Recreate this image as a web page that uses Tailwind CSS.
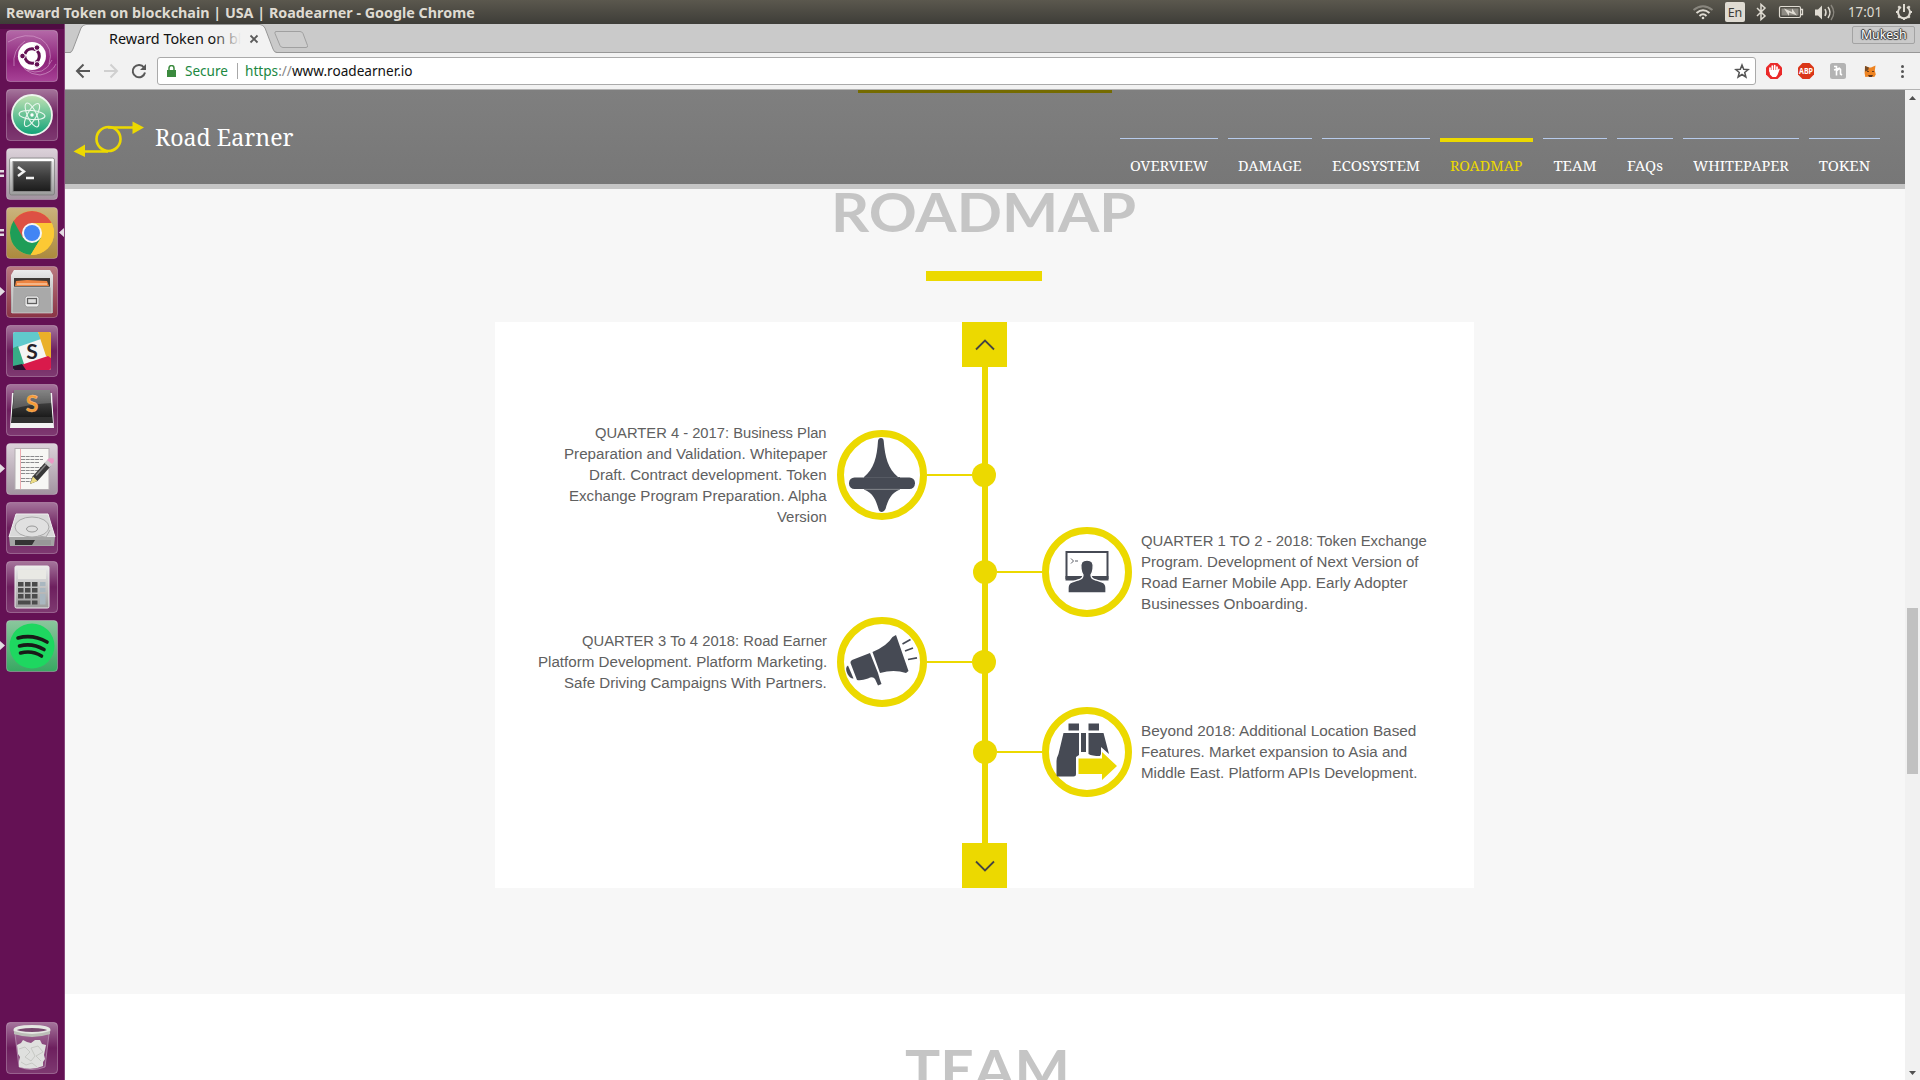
<!DOCTYPE html>
<html lang="en">
<head>
<meta charset="utf-8">
<title>Reward Token on blockchain | USA | Roadearner</title>
<script src="https://cdn.jsdelivr.net/npm/@tailwindcss/browser@4"></script>
</head>
<body class="w-[1920px] h-[1080px] overflow-hidden flex flex-col bg-white font-['Noto_Sans',sans-serif]">

<!-- System bar -->
<div class="h-6 shrink-0 flex items-center justify-between bg-linear-to-b from-[#5b584e] to-[#3e3d38] text-[#dfdbd2]">
  <div class="pl-1.5 text-[15px] leading-6 font-bold whitespace-nowrap"><span data-w="469">Reward Token on blockchain | USA | Roadearner - Google Chrome</span></div>
  <svg class="w-[232px] h-6 shrink-0" viewBox="1688 0 232 24" fill="none" stroke="#dfdbd2">
    <path d="M1693.500 10Q1703 2.500 1712.500 10" stroke="#89867e" stroke-width="2"/>
    <path d="M1696.500 13Q1703 7.500 1709.500 13M1699.500 16Q1703 12.500 1706.500 16" stroke-width="2"/>
    <circle cx="1703" cy="18" r="1.300" fill="#dfdbd2" stroke="none"/>
    <rect x="1725" y="2" width="20" height="20" rx="2" fill="#dfdbd2" stroke="none"/>
    <text x="1735" y="17" text-anchor="middle" font-size="12.500" font-family="Noto Sans, sans-serif" fill="#3c3b37" stroke="none">En</text>
    <path d="M1757 8l8 8-4 3.500V4.500l4 3.500-8 8" stroke-width="1.500"/>
    <rect x="1779.500" y="6.500" width="21" height="11" rx="1.500" stroke-width="1.200"/>
    <rect x="1781.500" y="8.500" width="17" height="7" fill="#8e8b83" stroke="none"/>
    <path d="M1801 9.500h1.500v5h-1.500" stroke-width="1.300"/>
    <path d="M1784 8.500l8 3.500v-3.500l5 7-8-3v3.500z" fill="#dfdbd2" stroke="none"/>
    <path d="M1815 9.500h3l4-4v14l-4-4h-3z" fill="#dfdbd2" stroke="none"/>
    <path d="M1825 9q2 3.500 0 7M1828 7q4 5.500 0 11" stroke-width="1.500"/>
    <path d="M1831 5q5.500 7.500 0 15" stroke="#89867e" stroke-width="1.500"/>
    <text x="1848" y="17" textLength="34" lengthAdjust="spacingAndGlyphs" font-size="15" font-family="Noto Sans, sans-serif" fill="#dfdbd2" stroke="none">17:01</text>
    <path d="M1901 7a6 6 0 1 0 6 0M1904 4v8" stroke-width="2"/>
    <path d="M1904 18v2M1896 12h2M1910 12h2M1898.300 6.300l1.700 1.700M1909.700 6.300l-1.700 1.700M1898.300 17.700l1.700-1.700M1909.700 17.700l-1.700-1.700" stroke-width="2.200"/>
  </svg>
</div>

<div class="flex flex-1 min-h-0">

<!-- Launcher -->
<aside class="w-[65px] shrink-0 bg-[#641154] border-r border-[#86457b]">
<svg class="block w-16 h-[1056px]" viewBox="0 24 64 1056">
  <defs>
    <linearGradient id="tile" x1="0" y1="0" x2="0" y2="1"><stop offset="0" stop-color="#fff" stop-opacity=".42"/><stop offset=".5" stop-color="#fff" stop-opacity=".06"/><stop offset="1" stop-color="#fff" stop-opacity=".17"/></linearGradient>
    <linearGradient id="dash" x1="0" y1="0" x2="0" y2="1"><stop offset="0" stop-color="#b469a8"/><stop offset=".6" stop-color="#8c2179"/><stop offset="1" stop-color="#a84397"/></linearGradient>
    <linearGradient id="atom" x1="0" y1="0" x2="0" y2="1"><stop offset="0" stop-color="#c3e3b5"/><stop offset="1" stop-color="#10a277"/></linearGradient>
    <linearGradient id="metal" x1="0" y1="0" x2="0" y2="1"><stop offset="0" stop-color="#ececec"/><stop offset="1" stop-color="#9b9b9b"/></linearGradient>
    <linearGradient id="dark" x1="0" y1="0" x2="0" y2="1"><stop offset="0" stop-color="#666"/><stop offset=".5" stop-color="#3c3c3c"/><stop offset="1" stop-color="#1b1b1b"/></linearGradient>
    <linearGradient id="grey" x1="0" y1="0" x2="0" y2="1"><stop offset="0" stop-color="#dcd2da"/><stop offset="1" stop-color="#a294a0"/></linearGradient>
    <linearGradient id="gold" x1="0" y1="0" x2="0" y2="1"><stop offset="0" stop-color="#cbb37d"/><stop offset="1" stop-color="#ac8a3d"/></linearGradient>
    <linearGradient id="rust" x1="0" y1="0" x2="0" y2="1"><stop offset="0" stop-color="#b97a80"/><stop offset="1" stop-color="#893345"/></linearGradient>
    <linearGradient id="green" x1="0" y1="0" x2="0" y2="1"><stop offset="0" stop-color="#8bc79d"/><stop offset="1" stop-color="#38a862"/></linearGradient>
    <clipPath id="slackclip"><rect x="13" y="332" width="38" height="38" rx="2"/></clipPath>
    <clipPath id="disc"><circle cx="32" cy="233" r="22"/></clipPath>
  </defs>
  <rect y="24" width="64" height="5" fill="#4f0c42"/>
  <g stroke="#fff" stroke-opacity=".28">
    <rect x="6.500" y="30.500" width="51" height="51" rx="3.500" fill="url(#dash)"/>
    <rect x="6.500" y="89.500" width="51" height="51" rx="3.500" fill="url(#tile)"/>
    <rect x="6.500" y="148.500" width="51" height="51" rx="3.500" fill="url(#grey)"/>
    <rect x="6.500" y="207.500" width="51" height="51" rx="3.500" fill="url(#gold)"/>
    <rect x="6.500" y="266.500" width="51" height="51" rx="3.500" fill="url(#rust)"/>
    <rect x="6.500" y="325.500" width="51" height="51" rx="3.500" fill="url(#tile)"/>
    <rect x="6.500" y="384.500" width="51" height="51" rx="3.500" fill="url(#tile)"/>
    <rect x="6.500" y="443.500" width="51" height="51" rx="3.500" fill="url(#grey)"/>
    <rect x="6.500" y="502.500" width="51" height="51" rx="3.500" fill="url(#tile)"/>
    <rect x="6.500" y="561.500" width="51" height="51" rx="3.500" fill="url(#tile)"/>
    <rect x="6.500" y="620.500" width="51" height="51" rx="3.500" fill="url(#green)"/>
    <rect x="6.500" y="1022.500" width="51" height="51" rx="3.500" fill="url(#tile)"/>
  </g>
  <!-- running markers -->
  <g fill="#e3dce2">
    <rect x="0" y="170" width="4" height="2.500"/><rect x="0" y="174.500" width="4" height="2.500"/>
    <rect x="0" y="229" width="4" height="2.500"/><rect x="0" y="233.500" width="4" height="2.500"/>
    <path d="M64 228v9l-5-4.500zM0 287l5 4.500-5 4.500zM0 464l5 4.500-5 4.500zM0 641l5 4.500-5 4.500z"/>
  </g>
  <!-- Ubuntu dash -->
  <g fill="none" stroke="#d9a6d0" stroke-opacity=".6"><path d="M8 42Q26 31 41 39Q54 48 49 64M14 66Q12 50 25 41M18 56Q22 74 40 75Q52 73 56 64M27 70Q44 77 52 60"/></g>
  <circle cx="32" cy="56" r="14" fill="#fff"/>
  <circle cx="32" cy="56" r="7.300" fill="none" stroke="#641154" stroke-width="3" stroke-dasharray="13.800 1.500" stroke-dashoffset="6"/>
  <g fill="#641154" stroke="#fff"><circle cx="22.500" cy="56" r="2.800"/><circle cx="37" cy="47.600" r="2.800"/><circle cx="37" cy="64.400" r="2.800"/></g>
  <!-- Atom -->
  <circle cx="32" cy="115" r="20" fill="url(#atom)" stroke="#eef5ee" stroke-width="1.800"/>
  <g fill="none" stroke="#e9f7ee" stroke-width="1.100"><ellipse cx="32" cy="115" rx="13" ry="4.500" transform="rotate(5 32 115)"/><ellipse cx="32" cy="115" rx="13" ry="4.500" transform="rotate(65 32 115)"/><ellipse cx="32" cy="115" rx="13" ry="4.500" transform="rotate(120 32 115)"/></g>
  <circle cx="32" cy="115" r="1.700" fill="#fff"/>
  <!-- Terminal -->
  <rect x="9.500" y="158" width="45" height="37" rx="2" fill="url(#metal)" stroke="#777" stroke-width=".7"/>
  <rect x="10.500" y="159" width="43" height="2.500" fill="#fff"/>
  <rect x="13" y="161.500" width="38" height="30" fill="url(#dark)" stroke="#888"/>
  <path d="M18 167l6 4.500-6 4.500M26 178h8" fill="none" stroke="#f2f2f2" stroke-width="2.400"/>
  <!-- Chrome -->
  <g clip-path="url(#disc)">
    <rect x="10" y="211" width="44" height="44" fill="#fcc934"/>
    <path d="M8 205H56V223H32L22.500 238.500L12 219z" fill="#dd5144"/>
    <path d="M12 218L23 238L41 238L30 256H6V218z" fill="#1e9d58"/>
    <path d="M32 223H56V256H30L41 238z" fill="#fcc934"/>
  </g>
  <circle cx="32" cy="233" r="10" fill="#f5f5f5"/><circle cx="32" cy="233" r="8" fill="#4285f4"/>
  <!-- Files -->
  <path d="M14 270h36l3 5v38H11v-38z" fill="url(#metal)"/>
  <rect x="14" y="278" width="36" height="10" fill="#3e3935"/>
  <path d="M15 286l1-5 11-1 20 1 2 5z" fill="#ed8441"/><path d="M17 284h30" stroke="#fce7cf"/>
  <path d="M13 287h38l1 26H12z" fill="#a9a9a9" stroke="#ddd" stroke-width=".6"/>
  <rect x="25" y="296" width="14" height="11" rx="2.500" fill="#eee" stroke="#999"/><rect x="27.500" y="298.500" width="9" height="5" fill="#ddd" stroke="#5f5f5f" stroke-width="1.300"/>
  <!-- Slack -->
  <g clip-path="url(#slackclip)">
    <rect x="13" y="332" width="38" height="38" fill="#f5f5f3"/>
    <path d="M13 332H38L41 339L18 347L13 349z" fill="#60c9cc"/>
    <path d="M38 332H51V358L46 356z" fill="#eab029"/>
    <path d="M13 348L18 346L26 370H13z" fill="#37ad86"/>
    <path d="M21 365L48 356L51 358V370H24z" fill="#d91a4b"/>
    <path d="M13 366l9-2 4 6H13z" fill="#2c1530"/>
  </g>
  <text x="32" y="358.500" font-size="21" font-weight="bold" text-anchor="middle" font-family="Lato, sans-serif" fill="#25222a">S</text>
  <!-- Sublime Text -->
  <path d="M12 393h40l2 35H10z" fill="#f3f3f3"/>
  <path d="M14 390h36l3 33H11z" fill="#303030"/><path d="M14 390h36l2 27H12z" fill="url(#dark)"/><path d="M14 390h36l1.500 13Q30 404 13 409z" fill="#fff" opacity=".2"/>
  <text x="32" y="412" font-size="23" font-weight="bold" text-anchor="middle" font-family="Lato, sans-serif" fill="#f79a35" stroke="#f9c88a" stroke-width=".4">S</text>
  <!-- Text editor -->
  <rect x="15" y="448.500" width="34" height="41" fill="#f7f7f4" stroke="#b4adb1"/>
  <path d="M20.500 449v40" stroke="#edabb0"/>
  <path d="M21 456.500h22M21 459.500h22M21 462.500h18M21 467.500h22M21 470.500h19M21 473.500h14M21 478.500h12M21 481.500h11" stroke="#8b8b8d" stroke-dasharray="4 .7"/>
  <path d="M30 484l2.500-7.500 13-14.500 5 4.500-13 14.500z" fill="#383838"/><path d="M33 476.500l4.500 4.500-7.500 3z" fill="#ecdc83"/><path d="M44.500 463l3-3.500 5 4.500-3 3.500z" fill="#ccc"/><path d="M47 460l2.500-2 4 .5.500 3-2 2.500z" fill="#eb9ac6"/><path d="M36 475.500l10-11" stroke="#858585" stroke-width="1.500"/>
  <!-- Disk -->
  <path d="M16 514h32l7 23H9z" fill="#d9d9d9" stroke="#f0f0f0"/>
  <path d="M9 537h46l-1 9H10z" fill="#a5a5a5"/><path d="M15 540h32v5H15z" fill="#343434"/><path d="M35 540h16v5H32z" fill="#989898"/>
  <ellipse cx="32" cy="527" rx="17" ry="10" fill="#e0e0e0" stroke="#aaa"/><ellipse cx="32" cy="529" rx="5.500" ry="3" fill="#dedede" stroke="#999"/><path d="M38 536l8 1 4-7" fill="none" stroke="#aaa"/>
  <!-- Calculator -->
  <rect x="15" y="566" width="34" height="42" rx="1.500" fill="url(#metal)" stroke="#eee"/>
  <rect x="18" y="570" width="28" height="9" fill="#e9e9e4"/>
  <g fill="#4b4b4b"><path d="M18 582h5.500v4.500H18zM25 582h5.500v4.500H25zM32 582h5.500v4.500H32zM18 588h5.500v4.500H18zM25 588h5.500v4.500H25zM32 588h5.500v4.500H32zM18 594h5.500v4.500H18zM25 594h5.500v4.500H25zM32 594h5.500v4.500H32zM18 600.500h12.500v4H18zM32 600.500h5.500v4H32z"/></g>
  <path d="M40 582h5.500v4H40zM40 588h5.500v4H40zM40 594h5.500v10.500H40z" fill="#a9b7c0"/>
  <!-- Spotify -->
  <circle cx="32" cy="646" r="22.500" fill="#1ed760"/>
  <path d="M18 638Q33 634 47 642M19.500 646Q32 642.500 44 649.500M20.500 653Q32 650 41.500 656" fill="none" stroke="#191a18" stroke-linecap="round" stroke-width="3.600"/>
  <!-- Trash -->
  <path d="M15 1034h34l-4 33Q32 1072 19 1067z" fill="#c79fc0" fill-opacity=".25" stroke="#c7aac3" stroke-opacity=".6"/>
  <path d="M17 1045l4-2 2-3 4 2 4 1 4-3 5 0 2 4 4 1-1 5-1 5 1 4-2 3v4Q32 1071 19 1067v-6l1-4-2-3z" fill="#dfe0de"/>
  <path d="M19 1049l6-2 5 5-5 5 6 4 4-5-4-8 7-2 5 6-7 4 5 5M21 1062l5 3 6-2 5 4" fill="none" stroke="#c6c8c4"/>
  <ellipse cx="32" cy="1030" rx="17" ry="3.500" fill="#77476e" stroke="#e5e7e2" stroke-width="3"/><path d="M14 1031v3Q32 1040 50 1034v-3Q32 1037 14 1031z" fill="#bcbfb8"/>
</svg>
</aside>

<main class="flex-1 min-w-0 flex flex-col">
  <!-- Tab strip -->
  <div class="h-[29px] shrink-0 relative bg-[#cacaca] flex justify-between">
    <svg class="absolute inset-0 w-full h-full" viewBox="65 24 1855 29" fill="none">
      <path d="M65 52.500H1920" stroke="#979797"/>
      <path d="M70 53Q72 52 73 49L81 28Q83 24.500 86 24.500H260Q263 24.500 265 28L273 49Q274 52 277 53z" fill="#f2f2f2"/>
      <path d="M65 52.500H70Q72 52 73 49L81 28Q83 24.500 86 24.500H260Q263 24.500 265 28L273 49Q274 52.500 277 52.500" stroke="#979797"/>
      <path d="M276 31.500h24q2 0 3 2l4.500 12q.5 2-1.500 2h-23q-2 0-3-2l-5-12q-.5-2 1-2z" stroke="#a0a0a0" fill="#cdcdcd"/>
      <path d="M250.500 35.500l7 7M257.500 35.500l-7 7" stroke="#5a5a5a" stroke-width="1.800"/>
    </svg>
    <div class="relative pl-[44px] text-[14.5px] leading-[28px] whitespace-nowrap text-[#111]"><span data-w="132">Reward Token on bl</span><i class="absolute right-0 top-1 w-7 h-5 bg-linear-to-r from-[#f2f2f2]/0 to-[#f2f2f2]"></i></div>
    <div class="relative mt-0.5 mr-[5px] w-[63px] h-[18px] border border-[#a3a3a3] rounded-[2px] text-white text-[12.5px] leading-4 text-center whitespace-nowrap [text-shadow:1px_0_1px_#333,-1px_0_1px_#333,0_1px_1px_#333,0_-1px_1px_#333]"><span data-w="46">Mukesh</span></div>
  </div>
  <!-- Toolbar -->
  <div class="h-[37px] shrink-0 bg-[#f2f2f2] border-b border-[#b3b3b3] flex items-center">
    <svg class="w-[92px] h-9 shrink-0" viewBox="65 53 92 36" fill="none" stroke="#585858" stroke-width="2">
      <path d="M90 71H77.500M83.500 64.500L77 71l6.500 6.500"/>
      <path d="M104 71h12.500M110.500 64.500l6.500 6.500-6.500 6.500" stroke="#d0d0d0"/>
      <path d="M144 67.500a6.200 6.200 0 1 0 1 5" /><path d="M146 64v6h-6z" fill="#585858" stroke="none"/>
    </svg>
    <div class="w-[1599px] h-7 shrink-0 bg-white border border-[#aaa] rounded-[3px] flex items-center text-[14.5px] leading-6 whitespace-nowrap">
      <svg class="w-[9px] h-3 ml-[9px] mr-[9px]" viewBox="0 0 9 12"><path d="M0 5h9v7H0z" fill="#3b8a3e"/><path d="M2 5V3a2.500 2.500 0 0 1 5 0v2" fill="none" stroke="#3b8a3e" stroke-width="1.500"/></svg>
      <span class="text-[#20883f] -mt-0.5" data-w="43">Secure</span>
      <i class="w-px h-4 bg-[#a8a8a8] ml-[9px] mr-[7px]"></i>
      <span class="text-[#111] -mt-0.5" data-w="168"><b class="font-normal text-[#20883f]">https</b><b class="font-normal text-[#888]">://</b>www.roadearner.io</span>
      <svg class="w-4 h-4 ml-auto mr-[5px]" viewBox="0 0 16 16"><path d="M8 2l1.700 4.300 4.500.3-3.500 2.900 1.200 4.500L8 11.500 4.100 14l1.200-4.500-3.500-2.900 4.500-.3z" fill="none" stroke="#555" stroke-width="1.500"/></svg>
    </div>
    <svg class="w-[164px] h-9 shrink-0" viewBox="1756 53 164 36">
      <path d="M1770.500 63h7l4.500 4.500v7l-4.500 4.500h-7l-4.500-4.500v-7z" fill="#ea2929"/>
      <path d="M1770 71v-3M1772.300 71v-5M1774.700 71v-5.500M1777 71v-4" stroke="#fff" stroke-width="1.700" stroke-linecap="round"/><path d="M1769.200 70h8.600l1-1.500 1 .5-2.300 6-1.500 2h-3.500l-2.500-2.500z" fill="#fff"/>
      <path d="M1802.500 63h7l4.500 4.500v7l-4.500 4.500h-7l-4.500-4.500v-7z" fill="#da3618"/>
      <text x="1799" y="74" font-size="8" font-weight="bold" font-family="Noto Sans, sans-serif" fill="#fff" textLength="14" lengthAdjust="spacingAndGlyphs">ABP</text>
      <rect x="1830" y="63" width="16" height="16" rx="2.500" fill="#b3b3b3"/>
      <path d="M1834 66.500h2.500v9M1836.500 71q4.500-4.500 4 0v3l1.500 1M1834 70l6-2" fill="none" stroke="#fff" stroke-width="1.600"/>
      <path d="M1865 66l4 1.500h2l4.500-2-.7 5 1 4-1.500 2.500-4-.5-5 .5-.7-4z" fill="#ee8422"/><path d="M1865 66l4 1.500-1 3-3 1z" fill="#764a24"/><path d="M1868 75h5l-1 2h-3z" fill="#633719"/><path d="M1867 71.500h2M1872 71.500h2" stroke="#6c3d1a"/>
      <g fill="#555"><circle cx="1902.500" cy="66.500" r="1.500"/><circle cx="1902.500" cy="71.500" r="1.500"/><circle cx="1902.500" cy="76.500" r="1.500"/></g>
    </svg>
  </div>

  <div class="flex-1 min-h-0 flex">
    <div class="w-[1840px] shrink-0 flex flex-col">
      <!-- Site header -->
      <header class="relative h-[99px] shrink-0 border-b-[5px] border-[#c5c5c5] bg-linear-to-b from-[#7f7f7f] to-[#777777] flex justify-between font-['Noto_Serif','DejaVu_Serif',serif]">
        <div class="absolute left-[793px] top-0 w-[254px] h-[3px] bg-[#756b00]"></div>
        <div class="flex items-start text-white">
          <svg class="w-[72px] h-9 mt-[31px] ml-2 shrink-0" viewBox="73 121 72 36" fill="none" stroke="#ecd900" stroke-width="2.600"><circle cx="108.500" cy="139" r="12"/><path d="M108 127.500h26M108 151.500H84"/><path d="M132.500 121.500L144 127.500 132.500 134zM85 144.500L73.500 151.500 85 157z" fill="#ecd900" stroke="none"/></svg>
          <span class="mt-[32px] ml-[10px] text-[24px] leading-[30px] whitespace-nowrap" data-w="138">Road Earner</span>
        </div>
        <nav class="flex items-start gap-2.5 pt-12 pr-[25px] text-[15px] leading-5 text-white text-center whitespace-nowrap">
          <a class="w-[98px] border-t border-[#b7cbec] pt-[16px]"><span data-w="78">OVERVIEW</span></a>
          <a class="w-[84px] border-t border-[#b7cbec] pt-[16px]"><span data-w="64">DAMAGE</span></a>
          <a class="w-[108px] border-t border-[#b7cbec] pt-[16px]"><span data-w="88">ECOSYSTEM</span></a>
          <a class="w-[93px] border-t-4 border-[#ecd900] pt-[13px] text-[#ecd900]"><span data-w="73">ROADMAP</span></a>
          <a class="w-[64px] border-t border-[#b7cbec] pt-[16px]"><span data-w="43">TEAM</span></a>
          <a class="w-[56px] border-t border-[#b7cbec] pt-[16px]"><span data-w="36">FAQs</span></a>
          <a class="w-[116px] border-t border-[#b7cbec] pt-[16px]"><span data-w="96">WHITEPAPER</span></a>
          <a class="w-[71px] border-t border-[#b7cbec] pt-[16px]"><span data-w="51">TOKEN</span></a>
        </nav>
      </header>

      <!-- Roadmap -->
      <section class="h-[805px] shrink-0 bg-[#f7f7f7] flex flex-col items-start">
        <h2 class="h-[82px] w-full pl-[766px] pt-[3px] font-['Lato',sans-serif] font-bold text-[54px] leading-[40px] text-[#c5c5c5] whitespace-nowrap"><span data-w="305">ROADMAP</span></h2>
        <div class="w-[116px] h-2.5 ml-[861px] shrink-0 bg-[#ecd900]"></div>
        <div class="relative w-[979px] h-[566px] mt-[41px] ml-[430px] shrink-0 bg-white flex flex-col font-['Liberation_Sans',sans-serif] text-[15.5px] leading-[21px] text-[#606060] whitespace-nowrap">
          <div class="absolute left-[487px] top-[45px] w-1.5 h-[476px] bg-[#ecd900]"></div>
          <button class="w-[45px] h-[45px] ml-[467px] bg-[#ecd900] flex items-center justify-center shrink-0"><svg class="w-5 h-3" viewBox="0 0 20 12"><path d="M1 10.500L10 1.500l9 9" fill="none" stroke="#444" stroke-width="1.800"/></svg></button>

          <div class="h-[105px] mt-[55px] flex items-start shrink-0">
            <div class="w-[332px] text-right"><span data-w="232">QUARTER 4 - 2017: Business Plan</span><br><span data-w="263">Preparation and Validation. Whitepaper</span><br><span data-w="238">Draft. Contract development. Token</span><br><span data-w="258">Exchange Program Preparation. Alpha</span><br><span data-w="50">Version</span></div>
            <div class="mt-2 ml-2.5 flex items-center">
              <svg class="w-[90px] h-[90px]" viewBox="0 0 90 90"><circle cx="45" cy="45" r="41.500" fill="#fff" stroke="#ecd900" stroke-width="7"/><g fill="#464a54"><path d="M41 11Q41.300 8 44 8Q46.500 8 46.700 11C48 27 51 39 61 47H27C37 39 40 27 41 11z"/><rect x="12" y="47.500" width="66" height="11.500" rx="5.500"/><path d="M27 59.500H63C54 63 51 70 48.500 79Q47 82 45 82Q42 82 41.500 79C39 70 36 63 27 59.500z"/></g><path d="M27 47.500h36M27 59h36" stroke="#565a63" stroke-width="1.200"/></svg>
              <i class="w-[45px] h-0.5 bg-[#ecd900]"></i><i class="w-6 h-6 rounded-full bg-[#ecd900]"></i>
            </div>
          </div>

          <div class="h-[90px] ml-[478px] flex items-start shrink-0">
            <div class="flex items-center">
              <i class="w-6 h-6 rounded-full bg-[#ecd900]"></i><i class="w-[45px] h-0.5 bg-[#ecd900]"></i>
              <svg class="w-[90px] h-[90px]" viewBox="0 0 90 90"><circle cx="45" cy="45" r="41.500" fill="#fff" stroke="#ecd900" stroke-width="7"/><rect x="24.500" y="25" width="41" height="26" fill="#fff" stroke="#464a54" stroke-width="2"/><path d="M23.500 49h43v4.500h-43z" fill="#464a54"/><path d="M29 31.500l2.500 2.500-2.500 2.500M33 34h3" fill="none" stroke="#464a54" stroke-width=".9"/><path d="M39 42Q37.500 33 45 33Q52.500 33 51 42Q50.500 46 49 48Q49 52 54 53L61 55.500Q64 57 64 61V66H26V61Q26 57 29 55.500L36 53Q41 52 41 48Q39.500 46 39 42z" fill="#464a54" stroke="#fff" stroke-width="1.300"/></svg>
            </div>
            <div class="mt-[3px] ml-[8.5px]"><span data-w="286">QUARTER 1 TO 2 - 2018: Token Exchange</span><br><span data-w="277.500">Program. Development of Next Version of</span><br><span data-w="267">Road Earner Mobile App. Early Adopter</span><br><span data-w="167">Businesses Onboarding.</span></div>
          </div>

          <div class="h-[90px] flex items-start shrink-0">
            <div class="w-[332px] mt-[13px] text-right"><span data-w="245">QUARTER 3 To 4 2018: Road Earner</span><br><span data-w="289">Platform Development. Platform Marketing.</span><br><span data-w="263">Safe Driving Campaigns With Partners.</span></div>
            <div class="ml-2.5 flex items-center">
              <svg class="w-[90px] h-[90px]" viewBox="0 0 90 90"><circle cx="45" cy="45" r="41.500" fill="#fff" stroke="#ecd900" stroke-width="7"/><g fill="#464a54"><path d="M35.500 35Q50 29 55.500 20L59 18L71.500 54L69 56Q57 52 43 56z"/><path d="M13.500 46Q13 44.500 15 43L33 36L41 56Q42.500 62 44.500 67L41 68.500L38 62Q36 59 31 61.500Q24 64 20 63z"/><path d="M11 48.500L16.500 61.500Q13.500 62 10.500 57Q7.500 50.500 11 48.500z"/></g><path d="M65.500 27l8-4.500M68 34l8-3M71 42.500l9-1.700" stroke="#464a54" stroke-width="1.700"/></svg>
              <i class="w-[45px] h-0.5 bg-[#ecd900]"></i><i class="w-6 h-6 rounded-full bg-[#ecd900]"></i>
            </div>
          </div>

          <div class="h-[90px] ml-[478px] flex items-start shrink-0">
            <div class="flex items-center">
              <i class="w-6 h-6 rounded-full bg-[#ecd900]"></i><i class="w-[45px] h-0.5 bg-[#ecd900]"></i>
              <svg class="w-[90px] h-[90px]" viewBox="0 0 90 90"><circle cx="45" cy="45" r="41.500" fill="#fff" stroke="#ecd900" stroke-width="7"/><path d="M26.500 16.500h10.500v7H26.500zM46.500 16.500H57v7H46.500zM21.500 26h15.500v22l-3 2v17q0 2.500-2.500 2.500H15.500q-1 0-1-2V54q0-3 2-7zM39 26h5v19h-5zM46.500 26h15l5.500 21-8-7v7l-1 2q-8 0-11.500-2z" fill="#464a54"/><path d="M36.500 51.500H60V45L75 59 60 73V67H36.500z" fill="#ecd900"/></svg>
            </div>
            <div class="mt-[13px] ml-[8.5px]"><span data-w="275">Beyond 2018: Additional Location Based</span><br><span data-w="266">Features. Market expansion to Asia and</span><br><span data-w="276">Middle East. Platform APIs Development.</span></div>
          </div>

          <button class="w-[45px] h-[45px] mt-auto ml-[467px] bg-[#ecd900] flex items-center justify-center shrink-0"><svg class="w-5 h-3" viewBox="0 0 20 12"><path d="M1 1.500l9 9 9-9" fill="none" stroke="#444" stroke-width="1.800"/></svg></button>
        </div>
      </section>

      <!-- Team -->
      <section class="flex-1 min-h-0 overflow-hidden bg-white">
        <h2 class="pl-[840px] pt-[55px] font-['Lato',sans-serif] font-bold text-[54px] leading-[40px] text-[#c5c5c5] whitespace-nowrap"><span data-w="165">TEAM</span></h2>
      </section>
    </div>

    <!-- Scrollbar -->
    <div class="w-[15px] shrink-0 bg-[#f1f1f1] flex flex-col items-center">
      <svg class="w-[15px] h-[15px]" viewBox="0 0 15 15"><path d="M4 10l3.500-4 3.500 4z" fill="#505050"/></svg>
      <div class="w-[11px] h-[166px] mt-[503px] bg-[#c1c1c1]"></div>
      <svg class="w-[15px] h-[15px] mt-auto" viewBox="0 0 15 15"><path d="M4 6l3.500 4L11 6z" fill="#505050"/></svg>
    </div>
  </div>
</main>
</div>

<script>
function fit(el) {
  var natural = el.offsetWidth, w = parseFloat(el.dataset.w);
  el.style.transform = 'scaleX(' + w / natural + ')';
  el.style.marginRight = (w - natural) + 'px';
}
var observer = new ResizeObserver(function (entries) {
  entries.forEach(function (entry) { fit(entry.target); });
});
document.querySelectorAll('[data-w]').forEach(function (el) {
  el.style.display = 'inline-block';
  el.style.flexShrink = '0';
  el.style.transformOrigin = 'left';
  observer.observe(el);
});
</script>
</body>
</html>
